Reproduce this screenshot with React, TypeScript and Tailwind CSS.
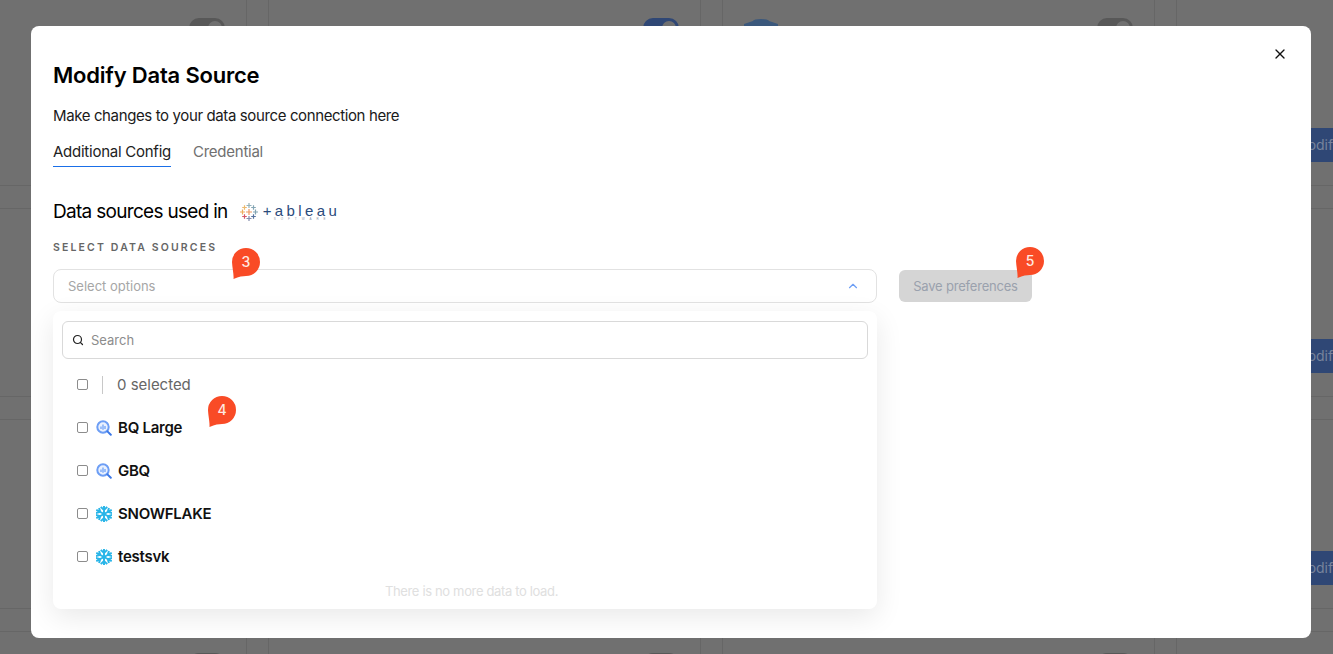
import { ChevronUp, Search, X } from 'lucide-react';

const FONT = 'font-["Inter","Open_Sans",sans-serif]';

function BigQueryIcon() {
  return (
    <svg viewBox="0 0 16 16" className="w-4 h-4 shrink-0">
      <circle cx="7" cy="7" r="5.7" fill="#eaf1fe" stroke="#6d9ef5" strokeWidth="2" />
      <path d="M5 6.5v2.5M7 4.6v5.2M9 6v3" stroke="#5a94f5" strokeWidth="1.1" />
      <path d="M11.4 11.4l3.4 3.4" stroke="#3b78e7" strokeWidth="2" strokeLinecap="round" />
    </svg>
  );
}

function SnowflakeIcon() {
  const arm = 'M8 8V.2M5.2 1.4L8 4.2l2.8-2.8';
  return (
    <svg viewBox="1 0.5 14 15" preserveAspectRatio="none" className="w-4 h-4 shrink-0" fill="none" stroke="#29b5e8" strokeWidth="1.7">
      {[0, 60, 120, 180, 240, 300].map((a) => (
        <path key={a} d={arm} transform={`rotate(${a} 8 8)`} />
      ))}
    </svg>
  );
}

function TableauLogo() {
  const marks: [number, number, number, string][] = [
    [9, 9, 3, '#e8762d'],
    [9, 2.5, 2.5, '#7099a6'],
    [9, 15.5, 2.5, '#5b6591'],
    [2.5, 9, 2.5, '#eb9129'],
    [15.5, 9, 2.5, '#59879b'],
    [4.5, 4.5, 2.3, '#e8a23c'],
    [13.5, 4.5, 2.3, '#5b879b'],
    [4.5, 13.5, 2.3, '#c72035'],
    [13.5, 13.5, 2.3, '#1f447e'],
  ];
  return (
    <div className="flex items-center gap-[5px]">
      <svg viewBox="0 0 18 18" className="w-[18px] h-[18px]">
        {marks.map(([x, y, r, c]) => (
          <path key={`${x}-${y}`} d={`M${x - r} ${y}H${x + r}M${x} ${y - r}V${y + r}`} stroke={c} strokeWidth="1.2" opacity="0.75" />
        ))}
      </svg>
      <div className="flex flex-col items-start w-[76px]">
        <span className="text-[15px] leading-[14px] tracking-[3.4px] text-[#2a4b7c] font-['Liberation_Sans',sans-serif]">+ableau</span>
        <span className="text-[3px] leading-[3px] tracking-[5px] ml-[11px] text-[#8a94a6] font-['Liberation_Sans',sans-serif]">SOFTWARE</span>
      </div>
    </div>
  );
}

// orange speech bubble from the product tour
function TourBadge({ n, className }: { n: number; className: string }) {
  return (
    <div className={`absolute w-7 h-[31px] ${className}`}>
      <svg viewBox="0 0 28 31" className="absolute inset-0 w-7 h-[31px]">
        <path d="M14 0a14 14 0 0 1 0 28c-3 0-7 .6-12.5 3C2 27 .3 20 0 14A14 14 0 0 1 14 0z" fill="#f94b26" />
      </svg>
      <span className="absolute inset-x-0 top-[4px] text-center text-sm leading-5 font-medium text-[#ffe9e2]">{n}</span>
    </div>
  );
}

function BgCard({ toggle, logo, modify }: { toggle?: string; logo?: React.ReactNode; modify?: boolean }) {
  return (
    <div className="relative h-[189.5px] border-x border-y border-[#666666]">
      <div className="flex items-start justify-between pt-[21px] pl-[21px] pr-[21px]">
        <div className="w-[34px] h-[34px]">{logo}</div>
        {toggle && (
          <div className={`w-9 h-5 rounded-full flex justify-end items-center px-[3px] ${toggle}`}>
            <div className="w-3.5 h-3.5 rounded-full bg-[#707070]" />
          </div>
        )}
      </div>
      {modify && (
        <div className="absolute left-[106px] bottom-[23px] w-[110px] h-[34px] rounded-md bg-[#2f4775] pl-[12px] text-sm leading-[34px] text-[#77839c]">
          Modify
        </div>
      )}
    </div>
  );
}

export default function App() {
  const off = 'bg-[#585858]';
  const options = [
    { name: 'BQ Large', icon: <BigQueryIcon /> },
    { name: 'GBQ', icon: <BigQueryIcon /> },
    { name: 'SNOWFLAKE', icon: <SnowflakeIcon /> },
    { name: 'testsvk', icon: <SnowflakeIcon /> },
  ];
  const cloud = (
    <svg viewBox="0 0 34 34" className="w-[34px] h-[34px]">
      <path d="M9 3a8 2 0 0 1 16 0l9 3v28H0V6z" fill="#3b587c" />
    </svg>
  );
  const redDot = <div className="w-4 h-4 mt-px rounded-full bg-[#7a4a4a]" />;

  return (
    <div className={`relative h-[654px] w-[1333px] overflow-hidden bg-[#707070] ${FONT}`}>
      {/* page behind the overlay */}
      <div className="grid grid-cols-[433px_433px_433px_433px] gap-x-[21px] gap-y-[22px] ml-[-186px] mt-[-4px]">
        <BgCard toggle={off} />
        <BgCard toggle="bg-[#2f4775]" />
        <BgCard toggle={off} logo={cloud} />
        <BgCard modify />
        <BgCard />
        <BgCard />
        <BgCard />
        <BgCard modify />
        <BgCard />
        <BgCard />
        <BgCard />
        <BgCard modify />
        <BgCard toggle={off} />
        <BgCard toggle={off} />
        <BgCard toggle={off} />
        <BgCard logo={redDot} />
      </div>

      {/* modal */}
      <div className="fixed inset-0 flex items-start pl-[31px] pt-[26px]">
        <div className="relative w-[1280px] h-[612px] rounded-lg bg-white pl-[22px] pt-[35px] text-black">
          <button className="absolute top-[20px] right-[23px] text-[#111]">
            <X className="w-4 h-4" strokeWidth={2} />
          </button>
          <h2 className="text-[22px] leading-7 font-semibold tracking-[-0.2px]">Modify Data Source</h2>
          <p className="mt-[17px] text-[15px] leading-5 tracking-[-0.38px] text-[#1a1a1a]">
            Make changes to your data source connection here
          </p>

          <div className="flex gap-[22px] mt-[16px] text-[15px] leading-5 tracking-[-0.25px]">
            <div className="border-b border-[#1a6fe8] pb-[4px] text-[#222]">Additional Config</div>
            <div className="text-[#707070]">Credential</div>
          </div>

          <div className="flex items-center gap-[12px] mt-[33px]">
            <span className="text-[19px] leading-6 tracking-[-0.7px]">Data sources used in</span>
            <TableauLogo />
          </div>

          <div className="mt-[17px] text-[10.5px] leading-[14px] font-semibold tracking-[2.15px] text-[#666666]">
            SELECT DATA SOURCES
          </div>

          <div className="relative flex gap-[22px] mt-[14px]">
            <div className="relative w-[824px] h-[34px] rounded-lg border border-[#e2e2e2] flex items-center justify-between pl-[14px] pr-[16px]">
              <span className="pt-px text-[13px] text-[#a6a6a6]">Select options</span>
              <ChevronUp className="w-3.5 h-3.5 text-[#6d9ef5]" />
              <TourBadge n={3} className="top-[-22px] left-[178px]" />
            </div>
            <div className="relative mt-px w-[133px] h-[32px] rounded-md bg-[#d5d5d5] text-center text-[13px] leading-8 tracking-[-0.2px] text-[#9aa1ad]">
              Save preferences
              <TourBadge n={5} className="top-[-23px] left-[117px]" />
            </div>
          </div>

          {/* dropdown */}
          <div className="relative w-[824px] h-[298px] mt-[8px] rounded-lg bg-white shadow-[0_8px_28px_rgba(0,0,0,0.09)] px-[9px] pt-[10px]">
            <div className="h-[38px] rounded-md border border-[#d9d9d9] flex items-center pl-[9px] gap-[7px]">
              <Search className="w-3 h-3 text-[#222]" strokeWidth={2.4} />
              <span className="pt-px text-[13px] text-[#8c8c8c]">Search</span>
            </div>
            <div className="flex items-center h-[43px] pl-[15px] mt-[4px]">
              <input type="checkbox" readOnly className="w-[11px] h-[11px] appearance-none rounded-[2px] border border-[#8c8c8c] bg-white" />
              <div className="w-px h-[18px] bg-[#c8c8c8] ml-[14px] mr-[14px]" />
              <span className="pt-0.5 text-[15px] tracking-[-0.02px] text-[#666666]">0 selected</span>
            </div>
            {options.map((o) => (
              <div key={o.name} className="flex items-center h-[43px] pl-[15px]">
                <input type="checkbox" readOnly className="w-[11px] h-[11px] appearance-none rounded-[2px] border border-[#8c8c8c] bg-white" />
                <span className="ml-[8px]">{o.icon}</span>
                <span className="ml-[6px] pt-0.5 text-[15px] font-semibold tracking-[-0.25px] text-[#111]">{o.name}</span>
              </div>
            ))}
            <div className="pl-[13px] text-center text-[13px] leading-5 tracking-[-0.35px] text-[#e0e0e0] mt-[3px]">
              There is no more data to load.
            </div>
            <TourBadge n={4} className="top-[85px] left-[155px]" />
          </div>
        </div>
      </div>
    </div>
  );
}
